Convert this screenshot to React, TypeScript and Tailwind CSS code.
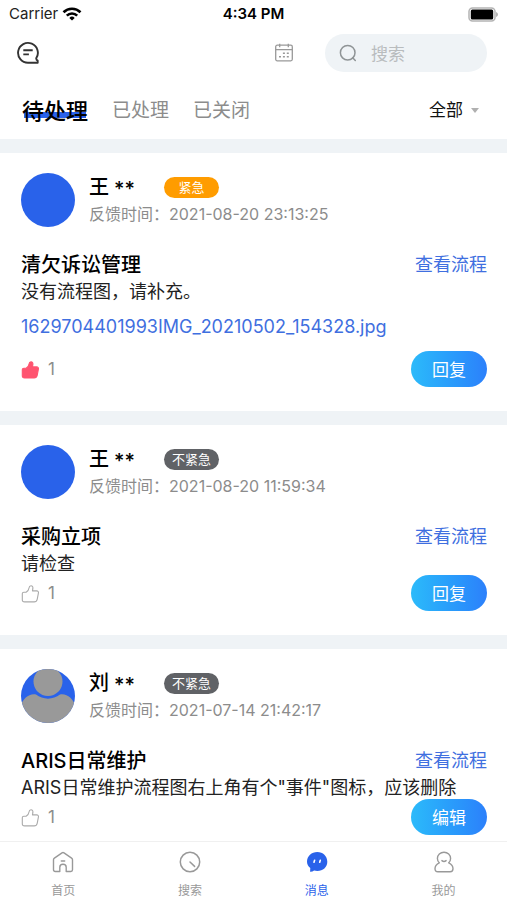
import { useState } from 'react';
import clsx from 'clsx';

type Feedback = {
  id: number;
  name: string;
  hasPhoto?: boolean;
  urgent: boolean;
  time: string;
  title: string;
  content: string;
  file?: string;
  likes: number;
  liked: boolean;
  action: string;
};

const FEEDBACKS: Feedback[] = [
  {
    id: 1,
    name: '王',
    urgent: true,
    time: '2021-08-20 23:13:25',
    title: '清欠诉讼管理',
    content: '没有流程图，请补充。',
    file: '1629704401993IMG_20210502_154328.jpg',
    likes: 1,
    liked: true,
    action: '回复',
  },
  {
    id: 2,
    name: '王',
    urgent: false,
    time: '2021-08-20 11:59:34',
    title: '采购立项',
    content: '请检查',
    likes: 1,
    liked: false,
    action: '回复',
  },
  {
    id: 3,
    name: '刘',
    hasPhoto: true,
    urgent: false,
    time: '2021-07-14 21:42:17',
    title: 'ARIS日常维护',
    content: 'ARIS日常维护流程图右上角有个"事件"图标，应该删除',
    likes: 1,
    liked: false,
    action: '编辑',
  },
];

const TABS = ['待处理', '已处理', '已关闭'];

function StatusBar() {
  return (
    <div className="grid h-7 grid-cols-3 items-center px-[9px] text-[15px] leading-5 text-black">
      <div className="flex items-center gap-1">
        <span className="text-[#222]">Carrier</span>
        <svg className="h-[14px] w-[20px]" viewBox="0 0 20 14" fill="none" stroke="currentColor" strokeWidth="2.6">
          <path d="M1.5 5.2a12.2 12.2 0 0 1 17 0" />
          <path d="M4.8 8.7a7.4 7.4 0 0 1 10.4 0" />
          <path d="M10 13.6 7.3 10.9a3.9 3.9 0 0 1 5.4 0z" fill="currentColor" stroke="none" />
        </svg>
      </div>
      <span className="text-center font-semibold">4:34 PM</span>
      <svg className="h-[15px] w-[30px] justify-self-end" viewBox="0 0 30 15">
        <rect x="1" y="1" width="26" height="13" rx="3.5" fill="#fff" stroke="#b4b4b4" strokeWidth="1.5" />
        <rect x="2.8" y="2.6" width="22.4" height="9.8" rx="1.5" />
        <path d="M28 5v5c1.200-.4 2-1.300 2-2.500s-.8-2.100-2-2.500z" fill="#b4b4b4" />
      </svg>
    </div>
  );
}

function ThumbIcon({ filled }: { filled: boolean }) {
  return (
    <svg
      className={clsx('size-[18px]', filled ? 'text-[#ff5470]' : 'text-[#aaa]')}
      viewBox="0 0 18 18"
      fill={filled ? 'currentColor' : 'none'}
      stroke="currentColor"
      strokeWidth="1.1"
      strokeLinejoin="round"
    >
      <path d="M2.900 7.200h2.200C6.900 6.200 7.800 4.700 8 3c.2-1.500.9-2.200 2-2.200 1.400 0 2 1 1.900 2.400l-.4 2.700h4.100c1.400 0 2.100.9 1.800 2.200l-1.200 6.200c-.4 1.700-1.300 2.600-3 2.600H3.600c-1.500 0-2.300-.8-2.300-2.200V8.900c0-1.100.6-1.700 1.600-1.700z" />
    </svg>
  );
}

function Avatar({ hasPhoto }: { hasPhoto?: boolean }) {
  return (
    <svg className="size-[54px] shrink-0 rounded-full bg-[#2962ea]" viewBox="0 0 54 54">
      {hasPhoto && (
        <g fill="#999">
          <circle cx="27" cy="12.500" r="14.500" />
          <path d="M0 36c2-6 8-12 15-10.500 7 5.500 17 5.500 24 0C46 24 52 30 54 36v18H0z" />
        </g>
      )}
    </svg>
  );
}

function FeedbackCard({ item }: { item: Feedback }) {
  const [liked, setLiked] = useState(item.liked);

  return (
    <article className="border-b-[14px] border-[#eff3f6] pt-5 pr-5 pb-6 pl-[21px]">
      <div className="flex gap-[14px]">
        <Avatar hasPhoto={item.hasPhoto} />
        <div className="min-w-0">
          <div className="flex h-7 items-center">
            <h3 className="flex w-[75px] items-center gap-[5px] text-[20px] font-medium text-black">
              {item.name}
              <span className="pt-1">**</span>
            </h3>
            <span
              className={clsx(
                'flex h-[21px] w-[55px] items-center justify-center rounded-full pt-px text-[13px] text-white',
                item.urgent ? 'bg-[#ff9c00]' : 'bg-[#606266]',
              )}
            >
              {item.urgent ? '紧急' : '不紧急'}
            </span>
          </div>
          <p className="text-[16px] leading-[26px] text-[#8c8c8c]">反馈时间：{item.time}</p>
        </div>
      </div>

      <div className="mt-[22px] flex items-center justify-between leading-8">
        <h2 className="text-[20px] font-medium text-black">{item.title}</h2>
        <a href="#flow" className="text-[18px] text-[#3f6fe0]">查看流程</a>
      </div>
      <p className="text-[18px] leading-[22px] whitespace-nowrap text-[#222]">{item.content}</p>
      {item.file && (
        <a href="#file" className="my-3 block truncate text-[18px] leading-6 text-[#3f6fe0]">
          {item.file}
        </a>
      )}

      <div className="flex items-center justify-between">
        <button
          className="flex items-center gap-[9px] pt-px text-[17px] text-[#8c8c8c]"
          aria-label="点赞"
          onClick={() => setLiked(!liked)}
        >
          <ThumbIcon filled={liked} />
          {item.likes}
        </button>
        <button className="h-9 w-[76px] rounded-full bg-linear-to-r from-[#2cbafa] to-[#2c80fb] pt-[3px] text-[17px] text-white">
          {item.action}
        </button>
      </div>
    </article>
  );
}

function Header() {
  const [active, setActive] = useState(TABS[0]);

  return (
    <header className="border-b-[14px] border-[#eff3f6]">
      <StatusBar />
      <div className="flex items-center px-5 pt-[6px]">
        <button aria-label="消息" className="-ml-1">
          <svg className="size-6" viewBox="0 0 24 24" fill="none" stroke="#333" strokeWidth="1.900" strokeLinejoin="round">
            <path d="M20.200 17.300A9.900 9.900 0 1 0 12 21.700h9.700v-2c-.9-.4-1.400-1.200-1.500-2.400z" />
            <path d="M7.300 9.200h9.400M7.300 13.400h5.600" />
          </svg>
        </button>
        <button aria-label="日历" className="mr-[31px] ml-auto">
          <svg className="size-5" viewBox="0 0 20 20" fill="none" stroke="#999" strokeWidth="1.300">
            <rect x="1.700" y="2.200" width="16.600" height="15.600" rx="1.500" />
            <path d="M1.700 6.700h16.600M5.700.8v3.400M14.300.8v3.400" />
            <path d="M8.900 10.300h2M12.800 10.300h2M5 13.700h2M8.900 13.700h2M12.800 13.700h2" strokeWidth="1.600" />
          </svg>
        </button>
        <label className="flex h-[38px] w-[162px] items-center gap-[14px] rounded-full bg-[#eff3f6] pl-[14px]">
          <svg className="size-[18px] shrink-0" viewBox="0 0 18 18" fill="none" stroke="#8f9496" strokeWidth="1.500" strokeLinecap="round">
            <circle cx="8.700" cy="8.700" r="7.300" />
            <path d="m13.700 13.700 2.600 2.800" />
          </svg>
          <input
            type="text"
            aria-label="搜索"
            placeholder="搜索"
            className="w-full min-w-0 bg-transparent pt-[3px] text-[17px] outline-none placeholder:text-[#b9bcbe]"
          />
        </label>
      </div>

      <div className="flex h-[67px] items-center justify-between pt-[10px] pr-5 pl-[22px]">
        <div className="flex items-center gap-6">
          {TABS.map((tab) => (
            <button
              key={tab}
              onClick={() => setActive(tab)}
              className={clsx(
                'relative isolate leading-8',
                tab === active ? 'text-[22px] font-medium text-black' : 'text-[19px] text-[#8c8c8c]',
              )}
            >
              {tab === active && <span className="absolute inset-x-[2px] bottom-[9px] -z-10 h-[6px] bg-[#2962ea]" />}
              {tab}
            </button>
          ))}
        </div>
        <label className="flex items-center gap-2 pr-2">
          <select aria-label="筛选" className="appearance-none bg-transparent text-[17px] text-[#111] outline-none">
            <option>全部</option>
          </select>
          <svg className="h-[5px] w-2" viewBox="0 0 8 5" fill="#b0b0b0">
            <path d="M0 0h8L4 5z" />
          </svg>
        </label>
      </div>
    </header>
  );
}

function BottomNav() {
  return (
    <nav className="grid h-[59px] shrink-0 grid-cols-4 border-t border-[#f0f0f0] bg-white text-[12px] leading-4 text-[#999]">
      <a href="#home" className="flex flex-col items-center gap-[10px] pt-[9px]">
        <svg className="size-[22px]" viewBox="0 0 22 22" fill="none" stroke="currentColor" strokeWidth="1.400" strokeLinejoin="round" strokeLinecap="round">
          <path d="M7.800 20.500H3.200c-1 0-1.700-.7-1.700-1.700V8.700c0-.7.300-1.200.9-1.600l7.600-5.200c.6-.4 1.400-.4 2 0l7.600 5.200c.6.4.9.9.9 1.600v10.100c0 1-.7 1.700-1.700 1.700h-4.600v-4.200c0-1.800-1.200-3-3.200-3s-3.200 1.200-3.200 3z" />
          <path d="M9.300 10h3.400" />
        </svg>
        首页
      </a>
      <a href="#search" className="flex flex-col items-center gap-[10px] pt-[9px]">
        <svg className="size-[22px]" viewBox="0 0 22 22" fill="none" stroke="currentColor" strokeWidth="1.500" strokeLinecap="round">
          <circle cx="11" cy="11" r="9.700" />
          <path d="m11 11 4.600 4.400" />
        </svg>
        搜索
      </a>
      <a href="#message" className="flex flex-col items-center gap-[10px] pt-[9px] text-[#2962ea]">
        <svg className="size-[22px]" viewBox="0 0 22 22">
          <path d="M11.300 1C17 1 21.300 5.200 21.300 10.700s-4.300 9.200-10 9.200c-1.200 0-2.200-.1-3.200-.4-1.200 1-2.500 1.400-4 1.300l.2-3.700C2.200 15.500 1 13.300 1 10.700 1 5.200 5.600 1 11.300 1z" fill="currentColor" />
          <path d="m8.600 9.200-.6 2M14.300 9.200l-.6 2" stroke="#fff" strokeWidth="1.600" strokeLinecap="round" />
        </svg>
        消息
      </a>
      <a href="#mine" className="flex flex-col items-center gap-[10px] pt-[9px]">
        <svg className="size-[22px]" viewBox="0 0 22 22" fill="none" stroke="currentColor" strokeWidth="1.400" strokeLinejoin="round" strokeLinecap="round">
          <path d="M6.300 11.800C4.900 10.600 4.400 9.200 4.400 7.600 4.400 4 7.300 1.200 11 1.200s6.600 2.800 6.600 6.400c0 1.600-.5 3-1.900 4.200 2.700 1.100 4.300 3.300 4.300 6 0 1.900-1 2.900-2.900 2.900H4.900C3 20.700 2 19.700 2 17.800c0-2.700 1.600-4.900 4.300-6z" />
          <path d="M8.900 9.600c1.200 1 3 1 4.200 0" />
        </svg>
        我的
      </a>
    </nav>
  );
}

export default function App() {
  return (
    <div className="flex h-screen flex-col bg-white font-[Inter,'Noto_Sans_CJK_SC',sans-serif]">
      <Header />
      <main className="min-h-0 flex-1 overflow-y-auto [scrollbar-width:none]">
        {FEEDBACKS.map((item) => (
          <FeedbackCard key={item.id} item={item} />
        ))}
      </main>
      <BottomNav />
    </div>
  );
}
